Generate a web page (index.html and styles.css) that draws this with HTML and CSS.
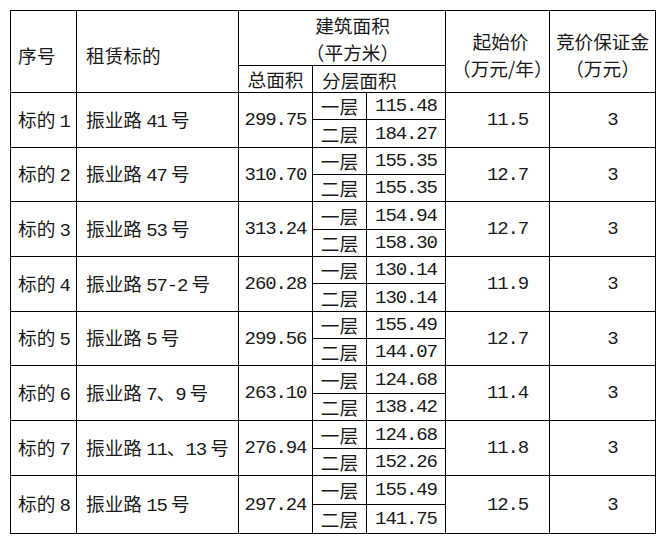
FILE: index.html
```html
<!DOCTYPE html>
<html lang="zh-CN">
<head>
<meta charset="utf-8">
<title>租赁标的</title>
<link rel="stylesheet" href="styles.css">
</head>
<body>
<div class="wrap">
<table class="t">
<colgroup>
<col class="w1"><col class="w2"><col class="w3"><col class="w4"><col class="w5"><col class="w6"><col class="w7">
</colgroup>
<tr class="h1">
<th rowspan="2" class="lft1 hd">序号</th>
<th rowspan="2" class="lft2 hd">租赁标的</th>
<th colspan="3" class="area">建筑面积<br>（平方米）</th>
<th rowspan="2" class="price">起始价<br>（万元/年）</th>
<th rowspan="2" class="dep">竞价保证金<br>（万元）</th>
</tr>
<tr class="h2">
<th class="ctr">总面积</th>
<th colspan="2" class="sub">分层面积</th>
</tr>

<tr class="r27"><td rowspan="2" class="lft1">标的 <span class="n">1</span></td><td rowspan="2" class="lft2">振业路 <span class="n">41</span> 号</td><td rowspan="2" class="n ctr">299.75</td><td class="ctr">一层</td><td class="n ctr">115.48</td><td rowspan="2" class="n shift">11.5</td><td rowspan="2" class="n shift">3</td></tr>
<tr class="r28"><td class="ctr">二层</td><td class="n ctr">184.27</td></tr>

<tr class="r27"><td rowspan="2" class="lft1">标的 <span class="n">2</span></td><td rowspan="2" class="lft2">振业路 <span class="n">47</span> 号</td><td rowspan="2" class="n ctr">310.70</td><td class="ctr">一层</td><td class="n ctr">155.35</td><td rowspan="2" class="n shift">12.7</td><td rowspan="2" class="n shift">3</td></tr>
<tr class="r27"><td class="ctr">二层</td><td class="n ctr">155.35</td></tr>

<tr class="r28"><td rowspan="2" class="lft1">标的 <span class="n">3</span></td><td rowspan="2" class="lft2">振业路 <span class="n">53</span> 号</td><td rowspan="2" class="n ctr">313.24</td><td class="ctr">一层</td><td class="n ctr">154.94</td><td rowspan="2" class="n shift">12.7</td><td rowspan="2" class="n shift">3</td></tr>
<tr class="r27"><td class="ctr">二层</td><td class="n ctr">158.30</td></tr>

<tr class="r27"><td rowspan="2" class="lft1">标的 <span class="n">4</span></td><td rowspan="2" class="lft2">振业路 <span class="n">57-2</span> 号</td><td rowspan="2" class="n ctr">260.28</td><td class="ctr">一层</td><td class="n ctr">130.14</td><td rowspan="2" class="n shift">11.9</td><td rowspan="2" class="n shift">3</td></tr>
<tr class="r28"><td class="ctr">二层</td><td class="n ctr">130.14</td></tr>

<tr class="r27"><td rowspan="2" class="lft1">标的 <span class="n">5</span></td><td rowspan="2" class="lft2">振业路 <span class="n">5</span> 号</td><td rowspan="2" class="n ctr">299.56</td><td class="ctr">一层</td><td class="n ctr">155.49</td><td rowspan="2" class="n shift">12.7</td><td rowspan="2" class="n shift">3</td></tr>
<tr class="r27"><td class="ctr">二层</td><td class="n ctr">144.07</td></tr>

<tr class="r28"><td rowspan="2" class="lft1">标的 <span class="n">6</span></td><td rowspan="2" class="lft2">振业路 <span class="n">7</span>、<span class="n">9</span> 号</td><td rowspan="2" class="n ctr">263.10</td><td class="ctr">一层</td><td class="n ctr">124.68</td><td rowspan="2" class="n shift">11.4</td><td rowspan="2" class="n shift">3</td></tr>
<tr class="r27"><td class="ctr">二层</td><td class="n ctr">138.42</td></tr>

<tr class="r28"><td rowspan="2" class="lft1">标的 <span class="n">7</span></td><td rowspan="2" class="lft2">振业路 <span class="n">11</span>、<span class="n">13</span> 号</td><td rowspan="2" class="n ctr">276.94</td><td class="ctr">一层</td><td class="n ctr">124.68</td><td rowspan="2" class="n shift">11.8</td><td rowspan="2" class="n shift">3</td></tr>
<tr class="r27"><td class="ctr">二层</td><td class="n ctr">152.26</td></tr>

<tr class="r29"><td rowspan="2" class="lft1">标的 <span class="n">8</span></td><td rowspan="2" class="lft2">振业路 <span class="n">15</span> 号</td><td rowspan="2" class="n ctr">297.24</td><td class="ctr">一层</td><td class="n ctr">155.49</td><td rowspan="2" class="n shift">12.5</td><td rowspan="2" class="n shift">3</td></tr>
<tr class="r29"><td class="ctr">二层</td><td class="n ctr">141.75</td></tr>
</table>
</div>
</body>
</html>
```

FILE: styles.css
```css
html, body {
  margin: 0;
  padding: 0;
  background: #ffffff;
}

body {
  font-family: "Noto Sans CJK SC", "Noto Sans", sans-serif;
  font-size: 18.67px;
  color: #1a1a1a;
}

.wrap {
  padding: 10px 0 0 10px;
}

.t {
  border-collapse: collapse;
  table-layout: fixed;
  width: 645px;
}

.w1 { width: 66px; }
.w2 { width: 162px; }
.w3 { width: 74px; }
.w4 { width: 54px; }
.w5 { width: 79px; }
.w6 { width: 104px; }
.w7 { width: 106px; }

.t th,
.t td {
  border: 1px solid #000;
  padding: 0;
  font-weight: 400;
  line-height: 24px;
  white-space: nowrap;
  vertical-align: middle;
  overflow: visible;
}

.h1 { height: 54px; }
.h2 { height: 27px; }
.r27 { height: 27px; }
.r28 { height: 28px; }
.r29 { height: 29px; }

.lft1 {
  text-align: left;
  padding-left: 7px !important;
}

.lft2 {
  text-align: left;
  padding-left: 9px !important;
}

.hd {
  padding-top: 6px !important;
}

.ctr {
  text-align: center;
}

.area {
  text-align: center;
  padding-left: 21px !important;
  padding-top: 0;
  line-height: 27px !important;
}

.price {
  text-align: center;
  padding-left: 6px !important;
  padding-top: 5px !important;
  line-height: 27px !important;
}

.dep {
  text-align: center;
  padding-top: 5px !important;
  line-height: 27px !important;
}

.sub {
  text-align: left;
  padding-left: 9px !important;
  padding-top: 2px !important;
}

.n {
  font-family: "Liberation Mono", "DejaVu Sans Mono", monospace;
  font-size: 19px;
  letter-spacing: -1.1px;
}

.shift {
  text-align: center;
  padding-left: 20px !important;
}
```
